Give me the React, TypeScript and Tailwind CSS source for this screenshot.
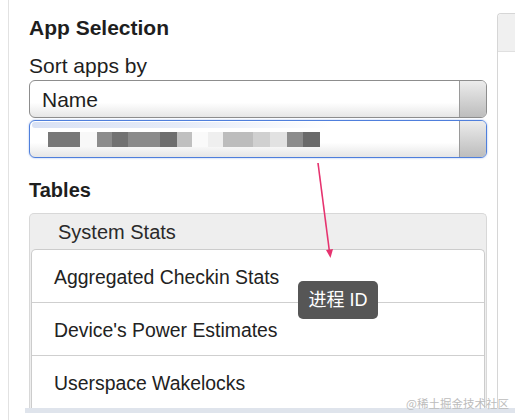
import React from "react";

const blocks: [number, string][] = [
  [32, "#787878"],
  [17, "#f8f8f8"],
  [15, "#8c8c8c"],
  [16, "#727272"],
  [32, "#8a8a8a"],
  [17, "#6e6e6e"],
  [15, "#c0c0c0"],
  [16, "#fafafa"],
  [15, "#efefef"],
  [30, "#bdbdbd"],
  [17, "#d0d0d0"],
  [17, "#e2e2e2"],
  [16, "#8c8c8c"],
  [17, "#6a6a6a"],
];

function SelectBox({ active, children }: { active?: boolean; children?: React.ReactNode }) {
  return (
    <div
      className={
        "relative flex h-[38px] w-[458px] overflow-hidden rounded-[6px] border bg-linear-to-b from-white from-60% to-[#e6e6e6] " +
        (active ? "border-[#4f7fdc] shadow-[0_0_2px_rgba(79,127,220,0.6)]" : "border-[#8d8d8d]")
      }
    >
      <div className="flex flex-1 items-center pl-[12px] pt-[2px]">{children}</div>
      <div className="w-[27px] border-l border-[#9a9a9a] bg-linear-to-b from-[#ececec] to-[#bdbdbd]" />
    </div>
  );
}

export default function App() {
  const rows = ["Aggregated Checkin Stats", "Device's Power Estimates", "Userspace Wakelocks"];
  return (
    <div
      className="relative flex h-[420px] w-[515px] overflow-hidden bg-white text-[#222]"
      style={{ fontFamily: '"Liberation Sans", Arial, sans-serif' }}
    >
      <div className="w-[8px] shrink-0" />
      <div className="flex flex-col border-l border-[#e2e2e2]">
        <div className="flex h-[408px]">
          <div className="flex w-[478px] shrink-0 flex-col pl-[20px]">
            <div className="pt-[16px] text-[21px] font-bold leading-[24px] text-[#1e1e1e]">App Selection</div>
            <div className="mt-[14px] text-[21px] leading-[24px] text-[#1e1e1e]">Sort apps by</div>
            <div className="mt-[2px]">
              <SelectBox>
                <span className="text-[21px] leading-[24px] text-[#1e1e1e]">Name</span>
              </SelectBox>
            </div>
            <div className="mt-[2px]">
              <SelectBox active>
                <div className="absolute left-[2px] top-[1px] h-[6px] w-[300px] rounded-full bg-linear-to-r from-[#c9d5f0] via-[#dbe3f5] to-transparent opacity-70" />
                <div className="ml-[6px] mt-[-2px] flex h-[15px]">
                  {blocks.map(([w, c], i) => (
                    <div key={i} className="h-full" style={{ width: w, background: c }} />
                  ))}
                </div>
              </SelectBox>
            </div>
            <div className="mt-[20px] text-[20px] font-bold leading-[24px] text-[#1e1e1e]">Tables</div>
            <div className="mt-[11px] flex w-[458px] flex-1 flex-col rounded-t-[5px] border border-b-0 border-[#d8d8d8] bg-[#eeeeee]">
              <div className="pl-[28px] pt-[6px] pb-[5px] text-[20px] leading-[24px] text-[#2a2a2a]">System Stats</div>
              <div className="mx-[1px] flex-1 rounded-t-[5px] border border-b-0 border-[#cccccc] bg-white">
                {rows.map((r, i) => (
                  <div
                    key={r}
                    className={
                      "flex h-[53px] items-center pl-[22px] pt-[1px] text-[19.4px] leading-[24px] text-[#222] " +
                      (i < rows.length - 1 ? "border-b border-[#cfcfcf]" : "")
                    }
                  >
                    {r}
                  </div>
                ))}
              </div>
            </div>
          </div>
          <div className="ml-[10px] mt-[13px] flex w-[30px] shrink-0 flex-col rounded-tl-[4px] border-l border-t border-[#d6d6d6]">
            <div className="h-[38px] rounded-tl-[4px] border-b border-[#e0e0e0] bg-[#f0f0f0]" />
            <div className="flex-1 bg-white" />
          </div>
        </div>
        <div className="ml-[16px] h-[5px] w-[500px] bg-[#dfe4ec]" />
      </div>

      {/* annotation arrow */}
      <svg className="absolute left-0 top-0" width="515" height="420" viewBox="0 0 515 420">
        <line x1="318" y1="163" x2="329.5" y2="252" stroke="#e6336f" strokeWidth="1.6" />
        <polygon points="326,250 333,249 330.5,258" fill="#e6336f" />
      </svg>

      {/* tooltip */}
      <div
        className="absolute left-[298px] top-[281px] flex h-[38px] w-[80px] items-center justify-center rounded-[5px] bg-[#565656] text-[18px] text-white"
        style={{ fontFamily: '"Liberation Sans", "Noto Sans CJK SC", sans-serif' }}
      >
        进程 ID
      </div>

      {/* watermark */}
      <div
        className="absolute left-[406px] top-[396px] text-[11.5px] leading-[14px] text-[#bcbcbc]"
        style={{ fontFamily: '"Noto Sans CJK SC", sans-serif' }}
      >
        @稀土掘金技术社区
      </div>
    </div>
  );
}
